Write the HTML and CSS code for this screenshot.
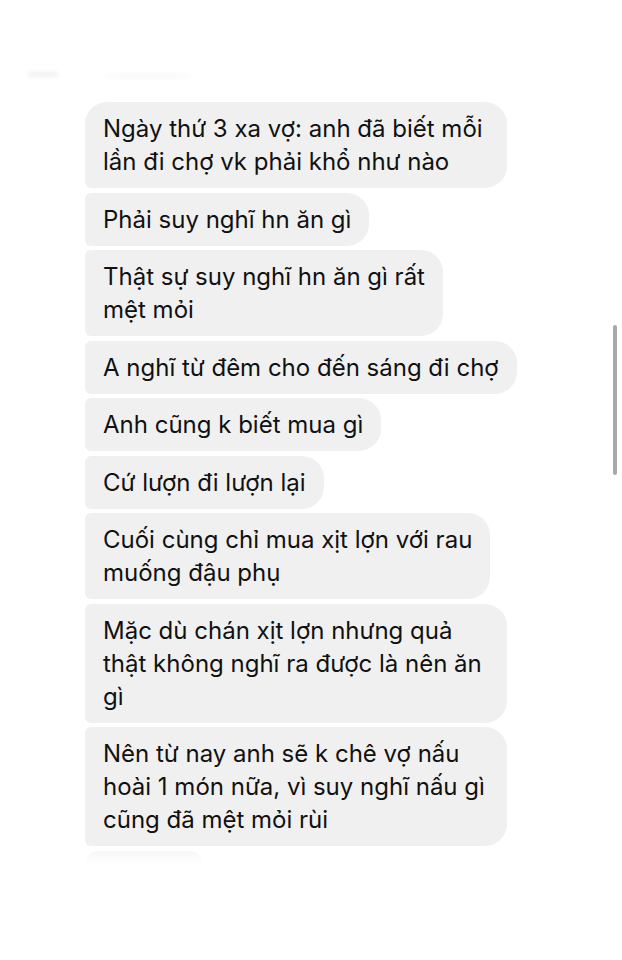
FILE: index.html
```html
<!DOCTYPE html>
<html lang="vi">
<head>
    <meta charset="UTF-8">
    <meta name="viewport" content="width=device-width, initial-scale=1.0">
    <title>Tin nhắn</title>
    <link rel="stylesheet" href="styles.css">
</head>
<body>
    <div class="screen">
        <div class="top-fade">
            <span class="blur-dot"></span>
            <span class="blur-line"></span>
        </div>
        <div class="thread">
            <div class="bubble first wide">Ngày thứ 3 xa vợ: anh đã biết mỗi<br>lần đi chợ vk phải khổ như nào</div>
            <div class="bubble">Phải suy nghĩ hn ăn gì</div>
            <div class="bubble">Thật sự suy nghĩ hn ăn gì rất<br>mệt mỏi</div>
            <div class="bubble">A nghĩ từ đêm cho đến sáng đi chợ</div>
            <div class="bubble">Anh cũng k biết mua gì</div>
            <div class="bubble">Cứ lượn đi lượn lại</div>
            <div class="bubble">Cuối cùng chỉ mua xịt lợn với rau<br>muống đậu phụ</div>
            <div class="bubble wide">Mặc dù chán xịt lợn nhưng quả<br>thật không nghĩ ra được là nên ăn<br>gì</div>
            <div class="bubble wide">Nên từ nay anh sẽ k chê vợ nấu<br>hoài 1 món nữa, vì suy nghĩ nấu gì<br>cũng đã mệt mỏi rùi</div>
            <div class="bubble ghost"></div>
        </div>
        <div class="scrollbar"></div>
    </div>
</body>
</html>
```

FILE: styles.css
```css
body {
    margin: 0;
    padding: 0;
    background: #fff;
    font-family: Inter, "Liberation Sans", Arial, sans-serif;
    color: #111;
}
.screen {
    position: relative;
    width: 622px;
    height: 960px;
    overflow: hidden;
}
.top-fade {
    display: flex;
    align-items: flex-start;
    gap: 50px;
    height: 102px;
    padding: 72px 0 0 28px;
    box-sizing: border-box;
}
.blur-dot {
    width: 30px;
    height: 5px;
    border-radius: 3px;
    background: #f0f0f0;
    filter: blur(2px);
}
.blur-line {
    width: 80px;
    height: 4px;
    margin-top: 2px;
    border-radius: 2px;
    background: #f8f8f8;
    filter: blur(2px);
}
.thread {
    display: flex;
    flex-direction: column;
    align-items: flex-start;
    gap: 4.5px;
    padding-left: 85px;
}
.bubble {
    background: #f0f0f0;
    border-radius: 6px 22px 22px 6px;
    padding: 10px 18px;
    font-size: 24px;
    line-height: 33px;
    white-space: nowrap;
}
.bubble.first {
    border-top-left-radius: 22px;
}
.bubble.wide {
    width: 386px;
}
.bubble.ghost {
    width: 118px;
    height: 14px;
    padding: 0;
    background: linear-gradient(#f7f7f7, #fff);
    border-radius: 18px 18px 0 0;
}
.scrollbar {
    position: absolute;
    top: 325px;
    left: 613px;
    width: 4px;
    height: 150px;
    border-radius: 2px;
    background: #a9a9a9;
}
```
